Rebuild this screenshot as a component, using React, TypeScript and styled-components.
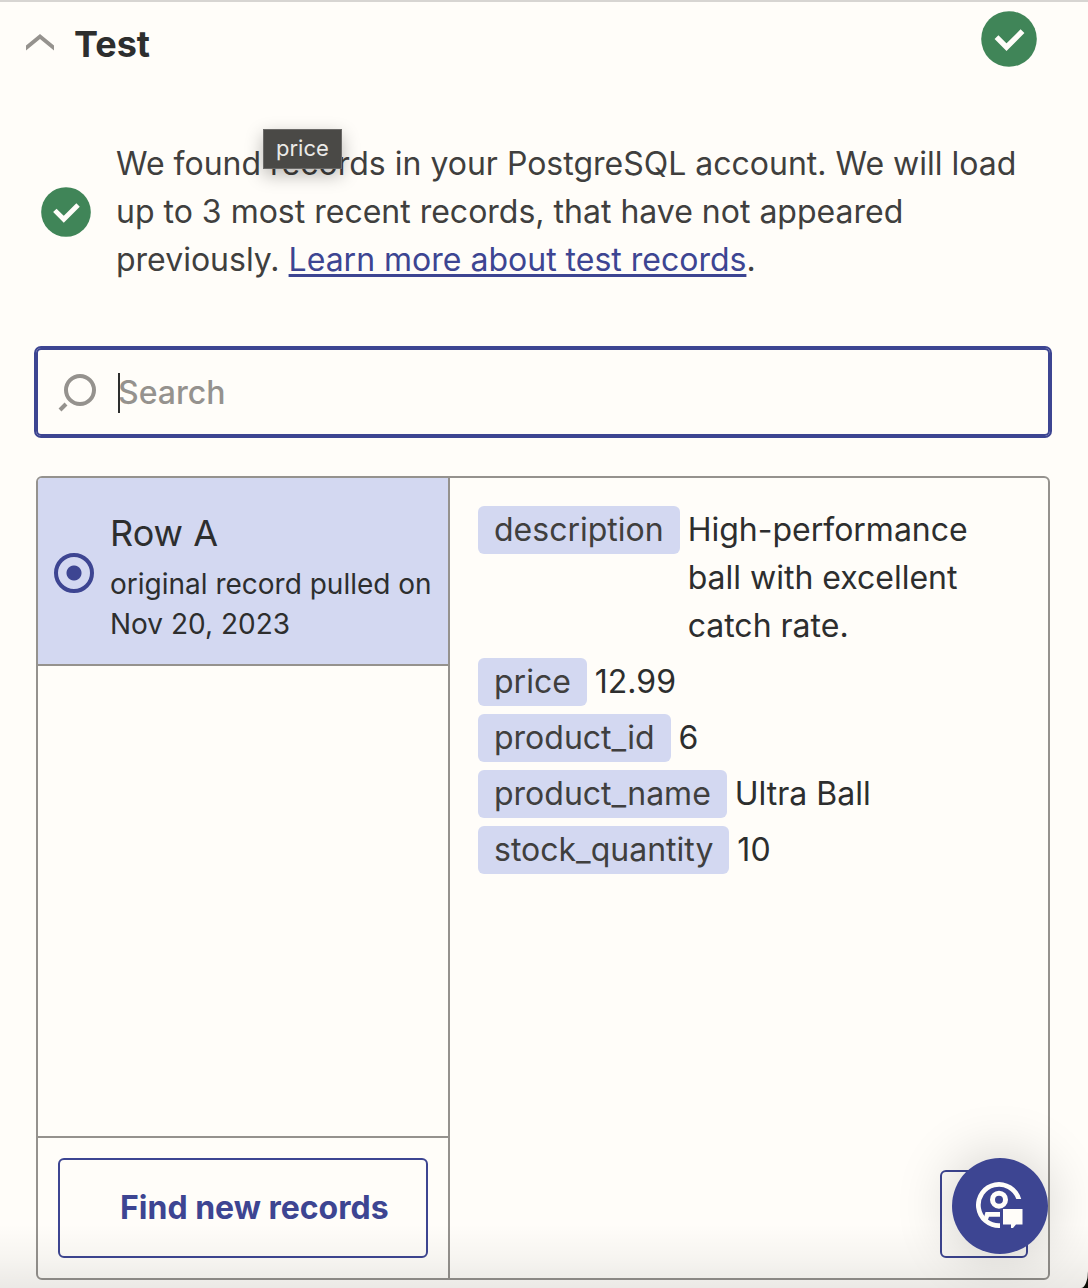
import React from "react";
import styled, { createGlobalStyle } from "styled-components";

const color = {
  page: "#fffdf9",
  text: "#2d2e2e",
  textSoft: "#403f3e",
  grey: "#95928e",
  line: "#d7d5d2",
  blue: "#3d4592",
  lavender: "#d3d8f1",
  green: "#408558",
};

const GlobalStyle = createGlobalStyle`
  * { box-sizing: border-box; }
  html { background: #0c0d05; }
  body {
    margin: 0;
    font-family: Inter, "Liberation Sans", sans-serif;
    font-optical-sizing: none;
    font-size: 32px;
    line-height: 48px;
    color: ${color.text};
    -webkit-font-smoothing: antialiased;
  }
  button, input { font: inherit; color: inherit; }
`;

const Page = styled.main`
  position: relative;
  display: flex;
  flex-direction: column;
  min-height: 100vh;
  padding: 0 38px 8px 36px;
  overflow: hidden;
  background: ${color.page};
  border-top: 2px solid ${color.line};
  border-bottom-right-radius: 7px 17px;
`;

const Header = styled.header`
  display: flex;
  align-items: center;
  justify-content: space-between;
  margin-right: 13px;
  margin-left: -12px;
  padding-top: 8px;
`;

const Toggle = styled.button`
  display: flex;
  align-items: center;
  gap: 18px;
  padding: 10px 0 0;
  border: 0;
  background: none;
`;

const Title = styled.span`
  font-size: 36px;
  font-weight: 700;
`;

const Notice = styled.section`
  position: relative;
  display: flex;
  align-items: center;
  gap: 25px;
  margin: 72px 0 64px;
  padding-left: 5px;
  color: ${color.textSoft};

  svg { flex: none; }
  p { margin: 0; }
`;

const Link = styled.a`
  color: ${color.blue};
  text-decoration: underline;
  text-decoration-thickness: 3px;
  text-underline-offset: 3px;
`;

const Tooltip = styled.div`
  position: absolute;
  top: -11px;
  left: 227px;
  padding: 0 12px 2px;
  border: 1px solid #6b6a68;
  background: #4a4946;
  color: #ebeae8;
  font-size: 22px;
  line-height: 36px;
  box-shadow: 0 6px 18px rgba(0, 0, 0, 0.28);
`;

const SearchBox = styled.label`
  position: relative;
  display: flex;
  align-items: center;
  gap: 20px;
  height: 88px;
  padding: 0 20px;
  border: 2px solid ${color.blue};
  border-radius: 5px;
  box-shadow: 0 0 0 2px ${color.blue};
`;

const SearchInput = styled.input`
  flex: 1;
  min-width: 0;
  padding: 2px 0 0;
  border: 0;
  outline: 0;
  background: none;
  font-weight: 500;

  &::placeholder { color: ${color.grey}; opacity: 1; }
`;

const Caret = styled.span`
  position: absolute;
  top: 23px;
  left: 80px;
  width: 2px;
  height: 40px;
  background: ${color.text};
`;

const Panel = styled.section`
  display: grid;
  grid-template-columns: 412px 1fr;
  flex: 1;
  margin-top: 40px;
  border: 2px solid ${color.grey};
  border-radius: 6px;
  overflow: hidden;
`;

const Records = styled.div`
  display: flex;
  flex-direction: column;
  border-right: 2px solid ${color.grey};
`;

const RecordRow = styled.label`
  display: flex;
  align-items: center;
  gap: 16px;
  padding: 24px 16px 20px;
  background: ${color.lavender};
  border-bottom: 2px solid ${color.grey};
`;

const Radio = styled.input`
  appearance: none;
  flex: none;
  width: 40px;
  height: 40px;
  margin: 0;
  border: 4px solid ${color.blue};
  border-radius: 50%;
  background: radial-gradient(circle, ${color.blue} 7px, transparent 8px);
`;

const RecordText = styled.span`
  display: flex;
  flex-direction: column;
  gap: 4px;
  padding-top: 4px;
`;

const RecordTitle = styled.span`
  font-size: 36px;
  line-height: 54px;
`;

const RecordNote = styled.span`
  font-size: 28px;
  line-height: 40px;
`;

const RecordsFooter = styled.div`
  display: flex;
  margin-top: auto;
  padding: 20px;
  border-top: 2px solid ${color.grey};
`;

const OutlineButton = styled.button`
  border: 2px solid ${color.blue};
  border-radius: 6px;
  background: ${color.page};
  color: ${color.blue};
  font-weight: 700;
`;

const FindButton = styled(OutlineButton)`
  flex: 1;
  height: 100px;
  padding: 0 20px 0 60px;
  text-align: left;
  white-space: nowrap;
`;

const SquareButton = styled(OutlineButton)`
  width: 88px;
  height: 88px;
  margin-top: auto;
  align-self: flex-end;
`;

const Details = styled.div`
  display: flex;
  flex-direction: column;
  padding: 28px 20px 20px 28px;
`;

const Fields = styled.dl`
  display: flex;
  flex-direction: column;
  gap: 8px;
  margin: 0;
`;

const Field = styled.div`
  display: flex;
  align-items: flex-start;
  gap: 8px;

  dt {
    flex: none;
    padding: 0 16px;
    border-radius: 6px;
    background: ${color.lavender};
    color: ${color.textSoft};
  }
  dd { margin: 0; }
`;

const BottomShade = styled.div`
  position: absolute;
  right: 0;
  bottom: 0;
  left: 0;
  height: 64px;
  background: linear-gradient(rgba(0, 0, 0, 0), rgba(0, 0, 0, 0.03) 50%, rgba(0, 0, 0, 0.08));
  pointer-events: none;
`;

const HelpButton = styled.button`
  position: fixed;
  right: 40px;
  bottom: 34px;
  display: grid;
  place-items: center;
  width: 96px;
  height: 96px;
  padding: 0;
  border: 0;
  border-radius: 50%;
  background: ${color.blue};
  box-shadow: 0 0 60px rgba(0, 0, 0, 0.2);
`;

const CheckBadge = ({ size, label }: { size: number; label: string }) => (
  <svg width={size} height={size} viewBox="0 0 56 56" role="img" aria-label={label}>
    <circle cx="28" cy="28" r="27.8" fill={color.green} />
    <path d="M15.5 26.2 25.5 36.2 41.5 20.2" fill="none" stroke={color.page} strokeWidth="5.4" />
  </svg>
);

const Chevron = () => (
  <svg width="32" height="28" viewBox="0 0 32 28" aria-hidden="true">
    <path d="M2 15.5 16 4l14 11.5v5L16 9 2 20.5z" fill={color.grey} />
  </svg>
);

const SearchIcon = () => (
  <svg width="40" height="40" viewBox="0 0 40 40" aria-hidden="true" fill="none" stroke={color.grey} strokeWidth="4">
    <circle cx="22" cy="18" r="14" />
    <path d="M2 38 8 32" />
  </svg>
);

const HelpIcon = () => (
  <svg width="48" height="48" viewBox="0 0 48 48" aria-hidden="true" fill={color.page}>
    <path d="M45.2 17A23 23 0 1 0 24 46V41.3A18.3 18.3 0 1 1 40.3 17Z" />
    <circle cx="23" cy="17.700" r="6.500" fill="none" stroke={color.page} strokeWidth="5" />
    <path d="M9.5 30H24V34.800H13L11.500 39H7Z" />
    <path d="M27 27H46.500V42.500H40L37 46H35V42.500H27Z" />
  </svg>
);

const fields = [
  { name: "description", value: "High-performance ball with excellent catch rate." },
  { name: "price", value: "12.99" },
  { name: "product_id", value: "6" },
  { name: "product_name", value: "Ultra Ball" },
  { name: "stock_quantity", value: "10" },
];

export default function App() {
  return (
    <>
      <GlobalStyle />
      <Page>
        <Header>
          <Toggle type="button" aria-expanded="true">
            <Chevron />
            <Title>Test</Title>
          </Toggle>
          <CheckBadge size={56} label="Step complete" />
        </Header>

        <Notice>
          <CheckBadge size={50} label="Success" />
          <p>
            We found records in your PostgreSQL account. We will load up to 3 most recent records,
            that have not appeared previously. <Link href="#test-records">Learn more about test records</Link>.
          </p>
          <Tooltip role="tooltip">price</Tooltip>
        </Notice>

        <SearchBox>
          <SearchIcon />
          <SearchInput type="text" placeholder="Search" aria-label="Search" />
          <Caret />
        </SearchBox>

        <Panel>
          <Records>
            <RecordRow>
              <Radio type="radio" name="record" defaultChecked />
              <RecordText>
                <RecordTitle>Row A</RecordTitle>
                <RecordNote>original record pulled on Nov 20, 2023</RecordNote>
              </RecordText>
            </RecordRow>
            <RecordsFooter>
              <FindButton type="button">Find new records</FindButton>
            </RecordsFooter>
          </Records>
          <Details>
            <Fields>
              {fields.map((field) => (
                <Field key={field.name}>
                  <dt>{field.name}</dt>
                  <dd>{field.value}</dd>
                </Field>
              ))}
            </Fields>
            <SquareButton type="button" aria-label="More options" />
          </Details>
        </Panel>
        <BottomShade />
      </Page>
      <HelpButton type="button" aria-label="Help">
        <HelpIcon />
      </HelpButton>
    </>
  );
}
